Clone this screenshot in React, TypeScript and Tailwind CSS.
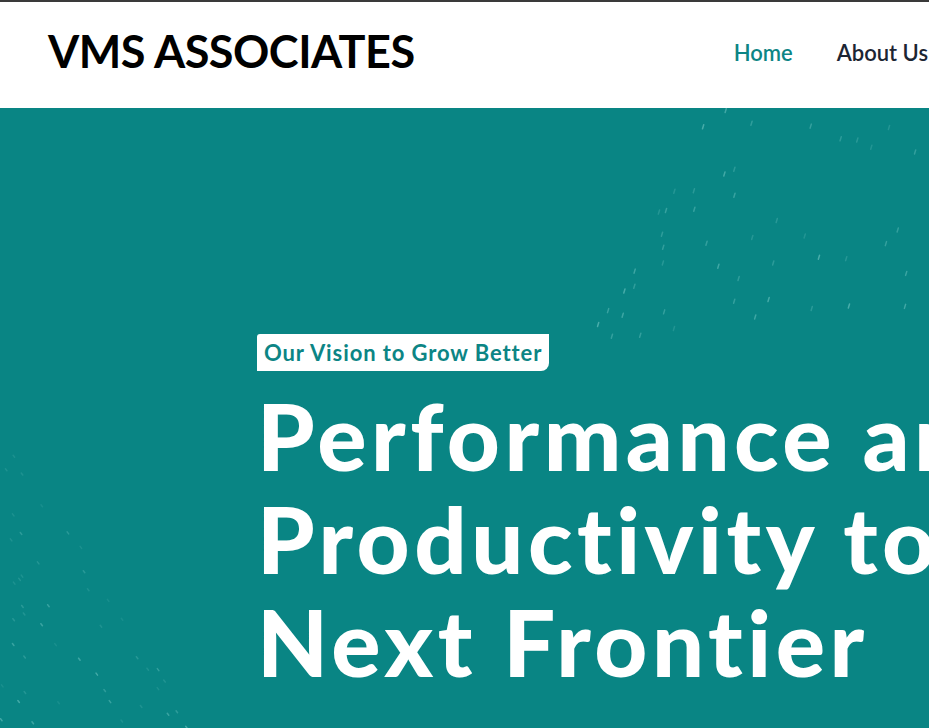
import React from "react";

function rand(seed: number) {
  let s = seed;
  return () => {
    s = (s * 9301 + 49297) % 233280;
    return s / 233280;
  };
}

const dashesTR = (() => {
  const r = rand(7);
  const arr: { x: number; y: number; o: number }[] = [];
  for (let i = 0; i < 60; i++) {
    const x = 580 + r() * 350;
    const y = r() * 230;
    if (x - 580 < (230 - y) * 0.5) continue;
    arr.push({ x, y, o: 0.2 + r() * 0.35 });
  }
  return arr;
})();

const dashesBL = (() => {
  const r = rand(13);
  const arr: { x: number; y: number; o: number }[] = [];
  for (let i = 0; i < 90; i++) {
    const x = r() * 200;
    const y = 300 + r() * 320;
    const d = (y - 300) / 320 - x / 200;
    if (d < 0) continue;
    arr.push({ x, y, o: 0.12 + r() * 0.45 * Math.max(0.2, (y - 300) / 320) });
  }
  return arr;
})();

export default function App() {
  return (
    <div className="w-[929px] h-[728px] overflow-hidden bg-white" style={{ fontFamily: "Lato, 'Open Sans', sans-serif" }}>
      <header className="h-[108px] border-t-2 border-[#3a3a3a] bg-white flex items-center justify-between pl-[48px] whitespace-nowrap">
        <div className="text-[45px] font-bold text-black tracking-[-0.5px] leading-none -mt-[8px]">VMS ASSOCIATES</div>
        <nav className="flex items-center gap-[44px] text-[22px] font-semibold mr-[1px] -mt-[5px]">
          <span className="text-[#0c8585]">Home</span>
          <span className="text-[#1c2533]">About Us</span>
        </nav>
      </header>
      <section className="relative h-[620px] bg-[#098584] overflow-hidden">
        <svg className="absolute inset-0 w-full h-full" width="929" height="620">
          {dashesTR.map((d, i) => (
            <line key={"a" + i} x1={d.x} y1={d.y + 2.5} x2={d.x + 1.2} y2={d.y - 1.5} stroke="#7fd0cc" strokeWidth="1.5" strokeLinecap="round" opacity={d.o} />
          ))}
          {dashesBL.map((d, i) => (
            <line key={"b" + i} x1={d.x} y1={d.y} x2={d.x + 1.5} y2={d.y + 2} stroke="#7fd0cc" strokeWidth="1.5" strokeLinecap="round" opacity={d.o} />
          ))}
        </svg>
        <div className="relative pl-[257px] pt-[226px] whitespace-nowrap">
          <div className="inline-block bg-white text-[#0c8585] font-bold text-[22px] tracking-[0.9px] leading-[37px] px-[7px] rounded-tl-[3px] rounded-br-[8px]">
            Our Vision to Grow Better
          </div>
          <h1 className="mt-[13px] text-white font-black text-[92px] leading-[103px] tracking-[4.5px]">
            Performance and
            <br />
            Productivity to the
            <br />
            Next Frontier
          </h1>
        </div>
      </section>
    </div>
  );
}
